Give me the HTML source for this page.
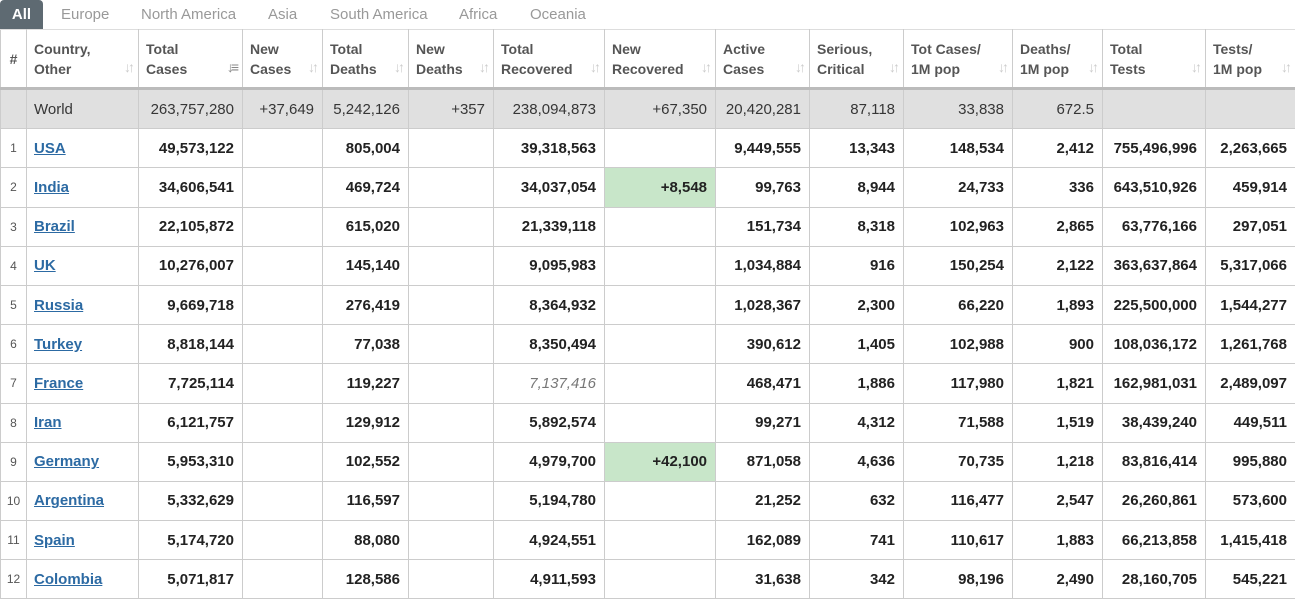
<!DOCTYPE html>
<html><head><meta charset="utf-8"><style>
body{margin:0;background:#fff;font-family:"Liberation Sans",Arial,sans-serif;width:1295px;height:593px;overflow:hidden}
.tabs{height:29px;position:relative}
.tab{position:absolute;top:0;height:29px;line-height:29px;font-size:15px;color:#999}
.tab.a{background:#5e6a72;color:#fff;font-weight:bold;border-radius:4px 4px 0 0;left:0;width:43px;text-align:center}
table{border-collapse:collapse;table-layout:fixed;width:1295px;position:absolute;top:29px;left:0}
td,th{border:1px solid #ccc;padding:0 8px 0 7px;font-size:15px;white-space:nowrap;overflow:hidden}
th{height:57px;text-align:left;font-size:14px;color:#555;font-weight:bold;line-height:20px;position:relative;vertical-align:middle;border-bottom:3px solid #bbb;border-top:1px solid #ddd}
th .s{position:absolute;right:6px;bottom:10px;color:#ccc;font-size:14px;letter-spacing:-3px}
th:first-child{padding:0;text-align:center}
td{height:38.2px;text-align:right;color:#222;font-weight:bold}
td:first-child{font-size:12px;font-weight:normal;color:#555;text-align:center;padding:0}
td:nth-child(2){text-align:left}
td a{color:#2c6aa3;text-decoration:underline}
tr.w td{background:#e0e0e0;font-weight:normal;color:#363636}
.g{background:#c8e6c9}
.it{font-style:italic;font-weight:normal;color:#777}
</style></head><body>
<div class="tabs">
<div class="tab a">All</div>
<div class="tab" style="left:61px">Europe</div>
<div class="tab" style="left:141px">North America</div>
<div class="tab" style="left:268px">Asia</div>
<div class="tab" style="left:330px">South America</div>
<div class="tab" style="left:459px">Africa</div>
<div class="tab" style="left:530px">Oceania</div>
</div>
<table>
<colgroup><col style="width:26px"><col style="width:112px"><col style="width:104px"><col style="width:80px"><col style="width:86px"><col style="width:85px"><col style="width:111px"><col style="width:111px"><col style="width:94px"><col style="width:94px"><col style="width:109px"><col style="width:90px"><col style="width:103px"><col style="width:90px"></colgroup>
<tr><th>#</th><th>Country,<br>Other<span class="s">↓↑</span></th><th>Total<br>Cases<span class="s" style="color:#888">↓≡</span></th><th>New<br>Cases<span class="s">↓↑</span></th><th>Total<br>Deaths<span class="s">↓↑</span></th><th>New<br>Deaths<span class="s">↓↑</span></th><th>Total<br>Recovered<span class="s">↓↑</span></th><th>New<br>Recovered<span class="s">↓↑</span></th><th>Active<br>Cases<span class="s">↓↑</span></th><th>Serious,<br>Critical<span class="s">↓↑</span></th><th>Tot Cases/<br>1M pop<span class="s">↓↑</span></th><th>Deaths/<br>1M pop<span class="s">↓↑</span></th><th>Total<br>Tests<span class="s">↓↑</span></th><th>Tests/<br>1M pop<span class="s">↓↑</span></th></tr>
<tr class="w"><td></td><td>World</td><td>263,757,280</td><td>+37,649</td><td>5,242,126</td><td>+357</td><td>238,094,873</td><td>+67,350</td><td>20,420,281</td><td>87,118</td><td>33,838</td><td>672.5</td><td></td><td></td></tr>
<tr><td>1</td><td><a>USA</a></td><td>49,573,122</td><td></td><td>805,004</td><td></td><td>39,318,563</td><td></td><td>9,449,555</td><td>13,343</td><td>148,534</td><td>2,412</td><td>755,496,996</td><td>2,263,665</td></tr>
<tr><td>2</td><td><a>India</a></td><td>34,606,541</td><td></td><td>469,724</td><td></td><td>34,037,054</td><td class="g">+8,548</td><td>99,763</td><td>8,944</td><td>24,733</td><td>336</td><td>643,510,926</td><td>459,914</td></tr>
<tr><td>3</td><td><a>Brazil</a></td><td>22,105,872</td><td></td><td>615,020</td><td></td><td>21,339,118</td><td></td><td>151,734</td><td>8,318</td><td>102,963</td><td>2,865</td><td>63,776,166</td><td>297,051</td></tr>
<tr><td>4</td><td><a>UK</a></td><td>10,276,007</td><td></td><td>145,140</td><td></td><td>9,095,983</td><td></td><td>1,034,884</td><td>916</td><td>150,254</td><td>2,122</td><td>363,637,864</td><td>5,317,066</td></tr>
<tr><td>5</td><td><a>Russia</a></td><td>9,669,718</td><td></td><td>276,419</td><td></td><td>8,364,932</td><td></td><td>1,028,367</td><td>2,300</td><td>66,220</td><td>1,893</td><td>225,500,000</td><td>1,544,277</td></tr>
<tr><td>6</td><td><a>Turkey</a></td><td>8,818,144</td><td></td><td>77,038</td><td></td><td>8,350,494</td><td></td><td>390,612</td><td>1,405</td><td>102,988</td><td>900</td><td>108,036,172</td><td>1,261,768</td></tr>
<tr><td>7</td><td><a>France</a></td><td>7,725,114</td><td></td><td>119,227</td><td></td><td class="it">7,137,416</td><td></td><td>468,471</td><td>1,886</td><td>117,980</td><td>1,821</td><td>162,981,031</td><td>2,489,097</td></tr>
<tr><td>8</td><td><a>Iran</a></td><td>6,121,757</td><td></td><td>129,912</td><td></td><td>5,892,574</td><td></td><td>99,271</td><td>4,312</td><td>71,588</td><td>1,519</td><td>38,439,240</td><td>449,511</td></tr>
<tr><td>9</td><td><a>Germany</a></td><td>5,953,310</td><td></td><td>102,552</td><td></td><td>4,979,700</td><td class="g">+42,100</td><td>871,058</td><td>4,636</td><td>70,735</td><td>1,218</td><td>83,816,414</td><td>995,880</td></tr>
<tr><td>10</td><td><a>Argentina</a></td><td>5,332,629</td><td></td><td>116,597</td><td></td><td>5,194,780</td><td></td><td>21,252</td><td>632</td><td>116,477</td><td>2,547</td><td>26,260,861</td><td>573,600</td></tr>
<tr><td>11</td><td><a>Spain</a></td><td>5,174,720</td><td></td><td>88,080</td><td></td><td>4,924,551</td><td></td><td>162,089</td><td>741</td><td>110,617</td><td>1,883</td><td>66,213,858</td><td>1,415,418</td></tr>
<tr><td>12</td><td><a>Colombia</a></td><td>5,071,817</td><td></td><td>128,586</td><td></td><td>4,911,593</td><td></td><td>31,638</td><td>342</td><td>98,196</td><td>2,490</td><td>28,160,705</td><td>545,221</td></tr>
</table>
</body></html>
